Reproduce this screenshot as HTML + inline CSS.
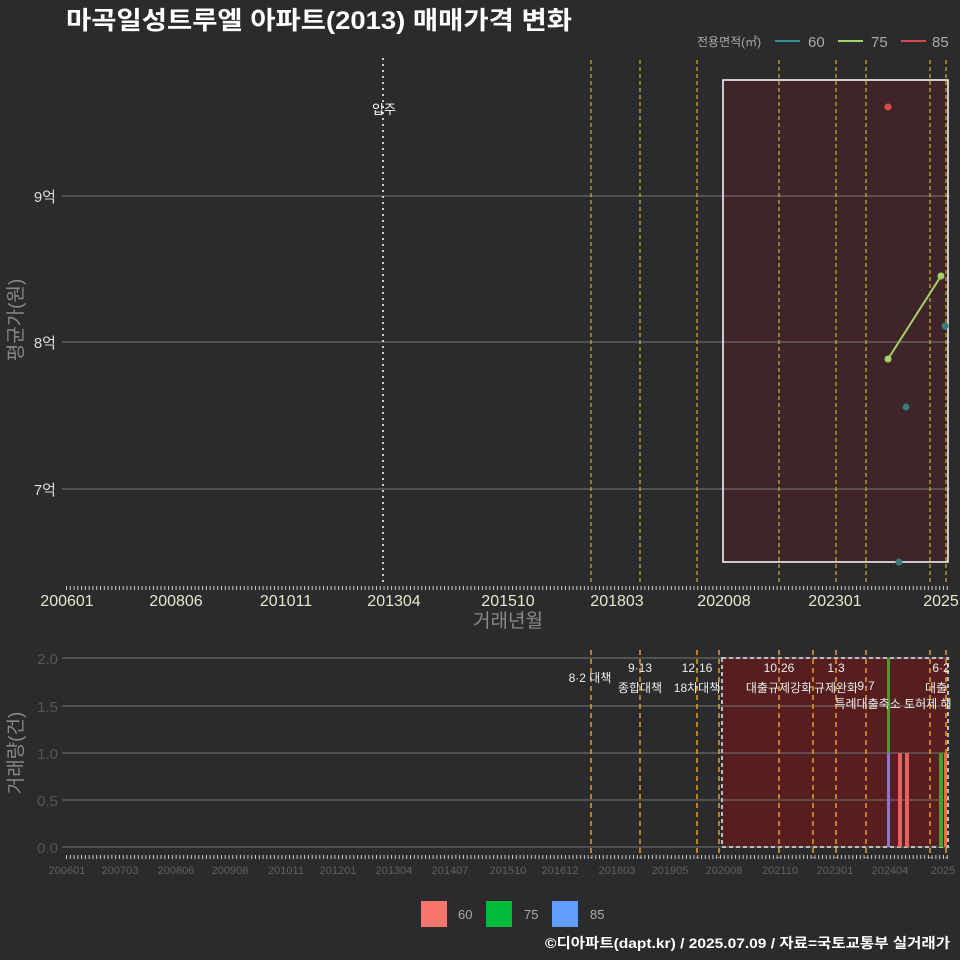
<!DOCTYPE html>
<html><head><meta charset="utf-8"><style>
html,body{margin:0;padding:0;background:#2b2b2d;}
svg{display:block;font-family:"Liberation Sans","Noto Sans CJK KR",sans-serif;}
</style></head><body>
<svg width="960" height="960" viewBox="0 0 960 960" xmlns="http://www.w3.org/2000/svg">
<rect width="960" height="960" fill="#2b2b2d"/>
<text x="66" y="29" fill="#fff" font-size="25" font-weight="bold" textLength="506" lengthAdjust="spacingAndGlyphs">마곡일성트루엘 아파트(2013) 매매가격 변화</text>
<text x="697" y="46" fill="#aaa" font-size="12">전용면적(㎡)</text>
<line x1="775" y1="41" x2="800" y2="41" stroke="#3a8f8f" stroke-width="2"/><text x="808" y="47" fill="#aaa" font-size="15">60</text>
<line x1="838" y1="41" x2="863" y2="41" stroke="#a3d36b" stroke-width="2"/><text x="871" y="47" fill="#aaa" font-size="15">75</text>
<line x1="901" y1="41" x2="926" y2="41" stroke="#d94b4b" stroke-width="2"/><text x="932" y="47" fill="#aaa" font-size="15">85</text>
<!-- top chart -->
<rect x="723" y="80" width="225" height="482" fill="#3f2428"/>
<g stroke="#777" stroke-width="1"><line x1="62" y1="196" x2="950" y2="196"/><line x1="62" y1="342" x2="950" y2="342"/><line x1="62" y1="489" x2="950" y2="489"/></g>
<g fill="#ddd" font-size="15" text-anchor="end"><text x="56" y="202">9억</text><text x="56" y="348">8억</text><text x="56" y="495">7억</text></g>
<text transform="translate(22,320) rotate(-90)" fill="#888" font-size="19" text-anchor="middle">평균가(원)</text>
<rect x="723" y="80" width="225" height="482" fill="none" stroke="#fff" stroke-width="1.5"/>
<line x1="383" y1="58" x2="383" y2="585" stroke="#ccc" stroke-width="2" stroke-dasharray="2,4"/>
<text x="384" y="114" fill="#fff" font-size="13" text-anchor="middle">입주</text>
<g stroke="#e6d22a" stroke-width="1" stroke-dasharray="4,3"><line x1="591" y1="60" x2="591" y2="585"/><line x1="640" y1="60" x2="640" y2="585"/><line x1="697" y1="60" x2="697" y2="585"/><line x1="779" y1="60" x2="779" y2="585"/><line x1="836" y1="60" x2="836" y2="585"/><line x1="866" y1="60" x2="866" y2="585"/><line x1="930" y1="60" x2="930" y2="585"/><line x1="946" y1="60" x2="946" y2="585"/></g>
<line x1="888" y1="359" x2="941" y2="276" stroke="#a3d36b" stroke-width="2"/>
<circle cx="888" cy="359" r="3.5" fill="#a3d36b"/><circle cx="941" cy="276" r="3.5" fill="#a3d36b"/>
<circle cx="888" cy="107" r="3.5" fill="#d94b4b"/>
<circle cx="906" cy="407" r="3.5" fill="#3a7a7a"/><circle cx="899" cy="562" r="3.5" fill="#3a7a7a"/><circle cx="945" cy="326" r="3.5" fill="#3a7a7a"/>
<line x1="66" y1="588" x2="950" y2="588" stroke="#ccc" stroke-width="4" stroke-dasharray="1,2.78"/>
<g fill="#e8e6c8" font-size="16" text-anchor="middle"><text x="67" y="606">200601</text><text x="176" y="606">200806</text><text x="286" y="606">201011</text><text x="394" y="606">201304</text><text x="508" y="606">201510</text><text x="617" y="606">201803</text><text x="724" y="606">202008</text><text x="835" y="606">202301</text><text x="941" y="606">2025</text></g>
<text x="508" y="627" fill="#888" font-size="19" text-anchor="middle">거래년월</text>
<!-- bottom chart -->
<rect x="722" y="658" width="226" height="189" fill="#561e1e"/>
<g stroke="#777" stroke-width="1"><line x1="62" y1="658" x2="950" y2="658"/><line x1="62" y1="706" x2="950" y2="706"/><line x1="62" y1="753" x2="950" y2="753"/><line x1="62" y1="800" x2="950" y2="800"/><line x1="62" y1="847" x2="950" y2="847"/></g>
<g fill="#555" font-size="15" text-anchor="end"><text x="58" y="664">2.0</text><text x="58" y="712">1.5</text><text x="58" y="759">1.0</text><text x="58" y="806">0.5</text><text x="58" y="853">0.0</text></g>
<text transform="translate(22,753) rotate(-90)" fill="#888" font-size="19" text-anchor="middle">거래량(건)</text>
<rect x="722" y="658" width="226" height="189" fill="none" stroke="#bbb" stroke-width="2" stroke-dasharray="4,3"/>
<g stroke="#e8a020" stroke-width="1.5" stroke-dasharray="5,4"><line x1="591" y1="650" x2="591" y2="858"/><line x1="640" y1="650" x2="640" y2="858"/><line x1="697" y1="650" x2="697" y2="858"/><line x1="719" y1="650" x2="719" y2="858"/><line x1="779" y1="650" x2="779" y2="858"/><line x1="813" y1="650" x2="813" y2="858"/><line x1="836" y1="650" x2="836" y2="858"/><line x1="866" y1="650" x2="866" y2="858"/><line x1="930" y1="650" x2="930" y2="858"/><line x1="946" y1="650" x2="946" y2="858"/></g>
<rect x="887" y="658" width="3" height="95" fill="#4a9a30"/><rect x="887" y="753" width="3" height="94" fill="#8877cc"/>
<rect x="898" y="753" width="4" height="94" fill="#e86060"/><rect x="905" y="753" width="4" height="94" fill="#e86060"/>
<rect x="939" y="753" width="4" height="94" fill="#4a9a30"/><rect x="944" y="753" width="3" height="94" fill="#e87040"/>
<g fill="#eee" font-size="12" text-anchor="middle"><text x="590" y="682">8·2 대책</text><text x="640" y="672">9·13</text><text x="640" y="692">종합대책</text><text x="697" y="672">12·16</text><text x="697" y="692">18차대책</text><text x="779" y="672">10·26</text><text x="779" y="692">대출규제강화</text><text x="836" y="672">1·3</text><text x="836" y="692">규제완화</text><text x="866" y="690">9·7</text><text x="893" y="708">특례대출축소 토허제 해</text><text x="941" y="672">6·2</text><text x="936" y="692">대출</text></g>
<line x1="66" y1="857" x2="950" y2="857" stroke="#ccc" stroke-width="4" stroke-dasharray="1,2.78"/>
<g fill="#606060" font-size="11" text-anchor="middle"><text x="67" y="874">200601</text><text x="120" y="874">200703</text><text x="176" y="874">200806</text><text x="230" y="874">200908</text><text x="286" y="874">201011</text><text x="338" y="874">201201</text><text x="394" y="874">201304</text><text x="450" y="874">201407</text><text x="508" y="874">201510</text><text x="560" y="874">201612</text><text x="617" y="874">201803</text><text x="670" y="874">201905</text><text x="724" y="874">202008</text><text x="780" y="874">202110</text><text x="835" y="874">202301</text><text x="890" y="874">202404</text><text x="943" y="874">2025</text></g>
<rect x="421" y="901" width="26" height="26" fill="#f8766d"/><text x="458" y="919" fill="#aaa" font-size="13">60</text>
<rect x="486" y="901" width="26" height="26" fill="#00ba38"/><text x="524" y="919" fill="#aaa" font-size="13">75</text>
<rect x="552" y="901" width="26" height="26" fill="#619cff"/><text x="590" y="919" fill="#aaa" font-size="13">85</text>
<text x="545" y="948" fill="#fff" font-size="14" font-weight="bold" textLength="405" lengthAdjust="spacingAndGlyphs">©디아파트(dapt.kr) / 2025.07.09 / 자료=국토교통부 실거래가</text>
</svg>
</body></html>
